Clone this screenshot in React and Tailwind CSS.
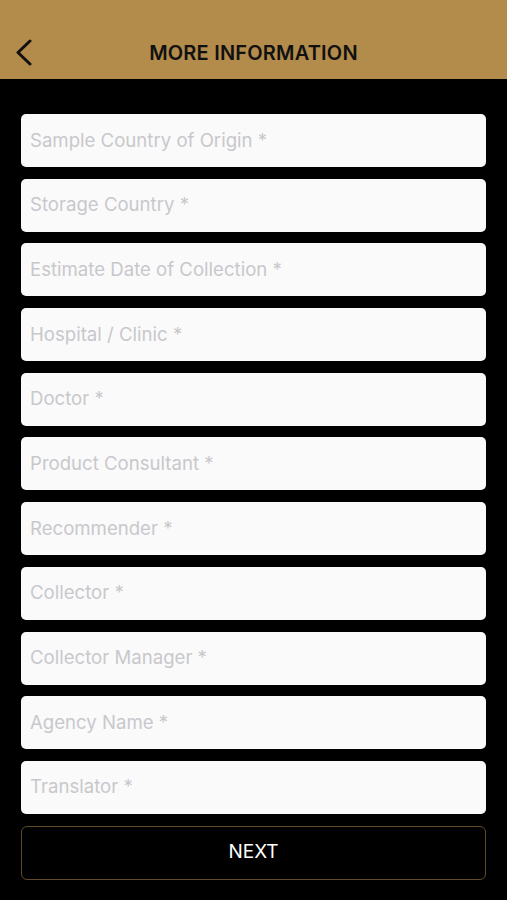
import React from "react";

const fields = [
  "Sample Country of Origin *",
  "Storage Country *",
  "Estimate Date of Collection *",
  "Hospital / Clinic *",
  "Doctor *",
  "Product Consultant *",
  "Recommender *",
  "Collector *",
  "Collector Manager *",
  "Agency Name *",
  "Translator *",
];

export default function App() {
  return (
    <div className="w-[507px] h-[900px] bg-black flex flex-col overflow-hidden" style={{ fontFamily: "Inter, 'Liberation Sans', sans-serif" }}>
      <div className="h-[79px] bg-[#b38b4b] flex items-end pb-[13px] relative shrink-0">
        <div className="w-full flex items-center justify-center h-[26px]">
          <span className="text-[20px] font-semibold text-[#111] tracking-[0.2px]">MORE INFORMATION</span>
        </div>
        <svg className="absolute left-[14px] top-[39px]" width="20" height="27" viewBox="0 0 20 27" fill="none">
          <path d="M16 2 L4 13.5 L16 25" stroke="#111" strokeWidth="3" strokeLinecap="round" strokeLinejoin="round" />
        </svg>
      </div>
      <div className="flex flex-col gap-[11.7px] px-[21px] pt-[35px]">
        {fields.map((f) => (
          <div key={f} className="h-[53px] bg-[#fafafa] rounded-[5px] flex items-center px-[9px]">
            <span className="text-[18.6px] text-[#c8c8cc]">{f}</span>
          </div>
        ))}
        <div className="h-[54px] rounded-[6px] border border-[#604a2a] flex items-center justify-center">
          <span className="text-[19px] text-white">NEXT</span>
        </div>
      </div>
    </div>
  );
}
